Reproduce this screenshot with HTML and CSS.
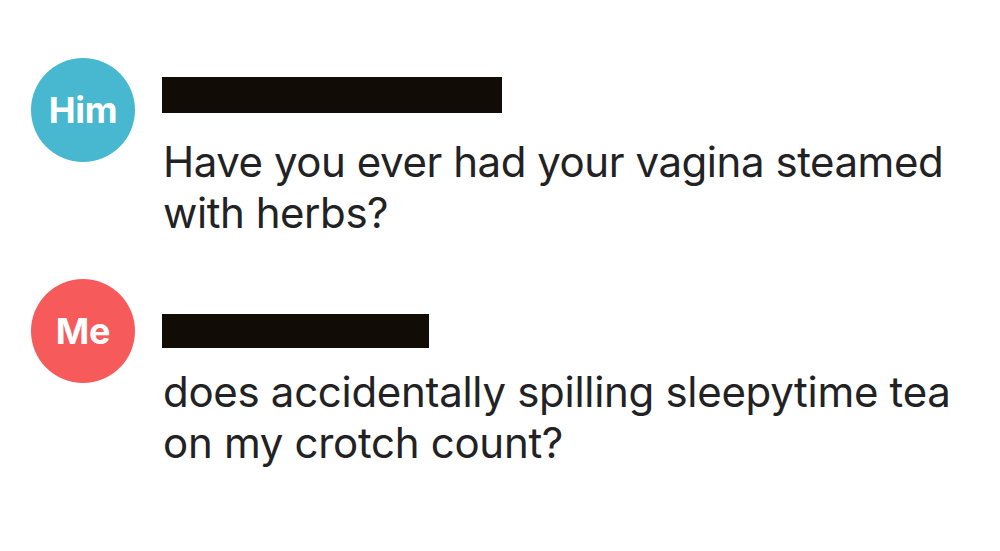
FILE: index.html
```html
<!DOCTYPE html>
<html lang="en">
<head>
<meta charset="utf-8">
<title>Chat</title>
<link rel="stylesheet" href="styles.css">
</head>
<body>
<main class="thread">
  <section class="message">
    <div class="avatar avatar-him">Him</div>
    <div class="content">
      <div class="redaction redaction-him"></div>
      <p class="text">Have you ever had your vagina steamed<br>with herbs?</p>
    </div>
  </section>
  <section class="message">
    <div class="avatar avatar-me">Me</div>
    <div class="content">
      <div class="redaction redaction-me"></div>
      <p class="text text-me">does accidentally spilling sleepytime tea<br>on my crotch count?</p>
    </div>
  </section>
</main>
</body>
</html>
```

FILE: styles.css
```css
html, body {
  margin: 0;
  padding: 0;
  background: #ffffff;
}

.thread {
  display: flex;
  flex-direction: column;
  gap: 41px;
  padding: 58px 0 0 31px;
  font-family: Inter, "Noto Sans", "Liberation Sans", sans-serif;
}

.message {
  display: flex;
  align-items: flex-start;
  gap: 27px;
}

.avatar {
  flex: 0 0 auto;
  width: 104px;
  height: 104px;
  border-radius: 50%;
  display: flex;
  align-items: center;
  justify-content: center;
  color: #ffffff;
  font-weight: 700;
  font-size: 36px;
  letter-spacing: -0.3px;
}

.avatar-him {
  background: #47b8cf;
}

.avatar-me {
  background: #f65a5a;
}

.content {
  display: flex;
  flex-direction: column;
}

.redaction {
  background: #110c06;
  height: 36px;
}

.redaction-him {
  width: 340px;
  margin-top: 19px;
}

.redaction-me {
  width: 267px;
  height: 34px;
  margin-top: 35px;
}

.text {
  margin: 23px 0 0 1px;
  font-size: 42px;
  line-height: 51px;
  color: #222224;
  letter-spacing: -0.45px;
}

.text-me {
  margin-top: 18px;
  letter-spacing: -0.3px;
}
```
